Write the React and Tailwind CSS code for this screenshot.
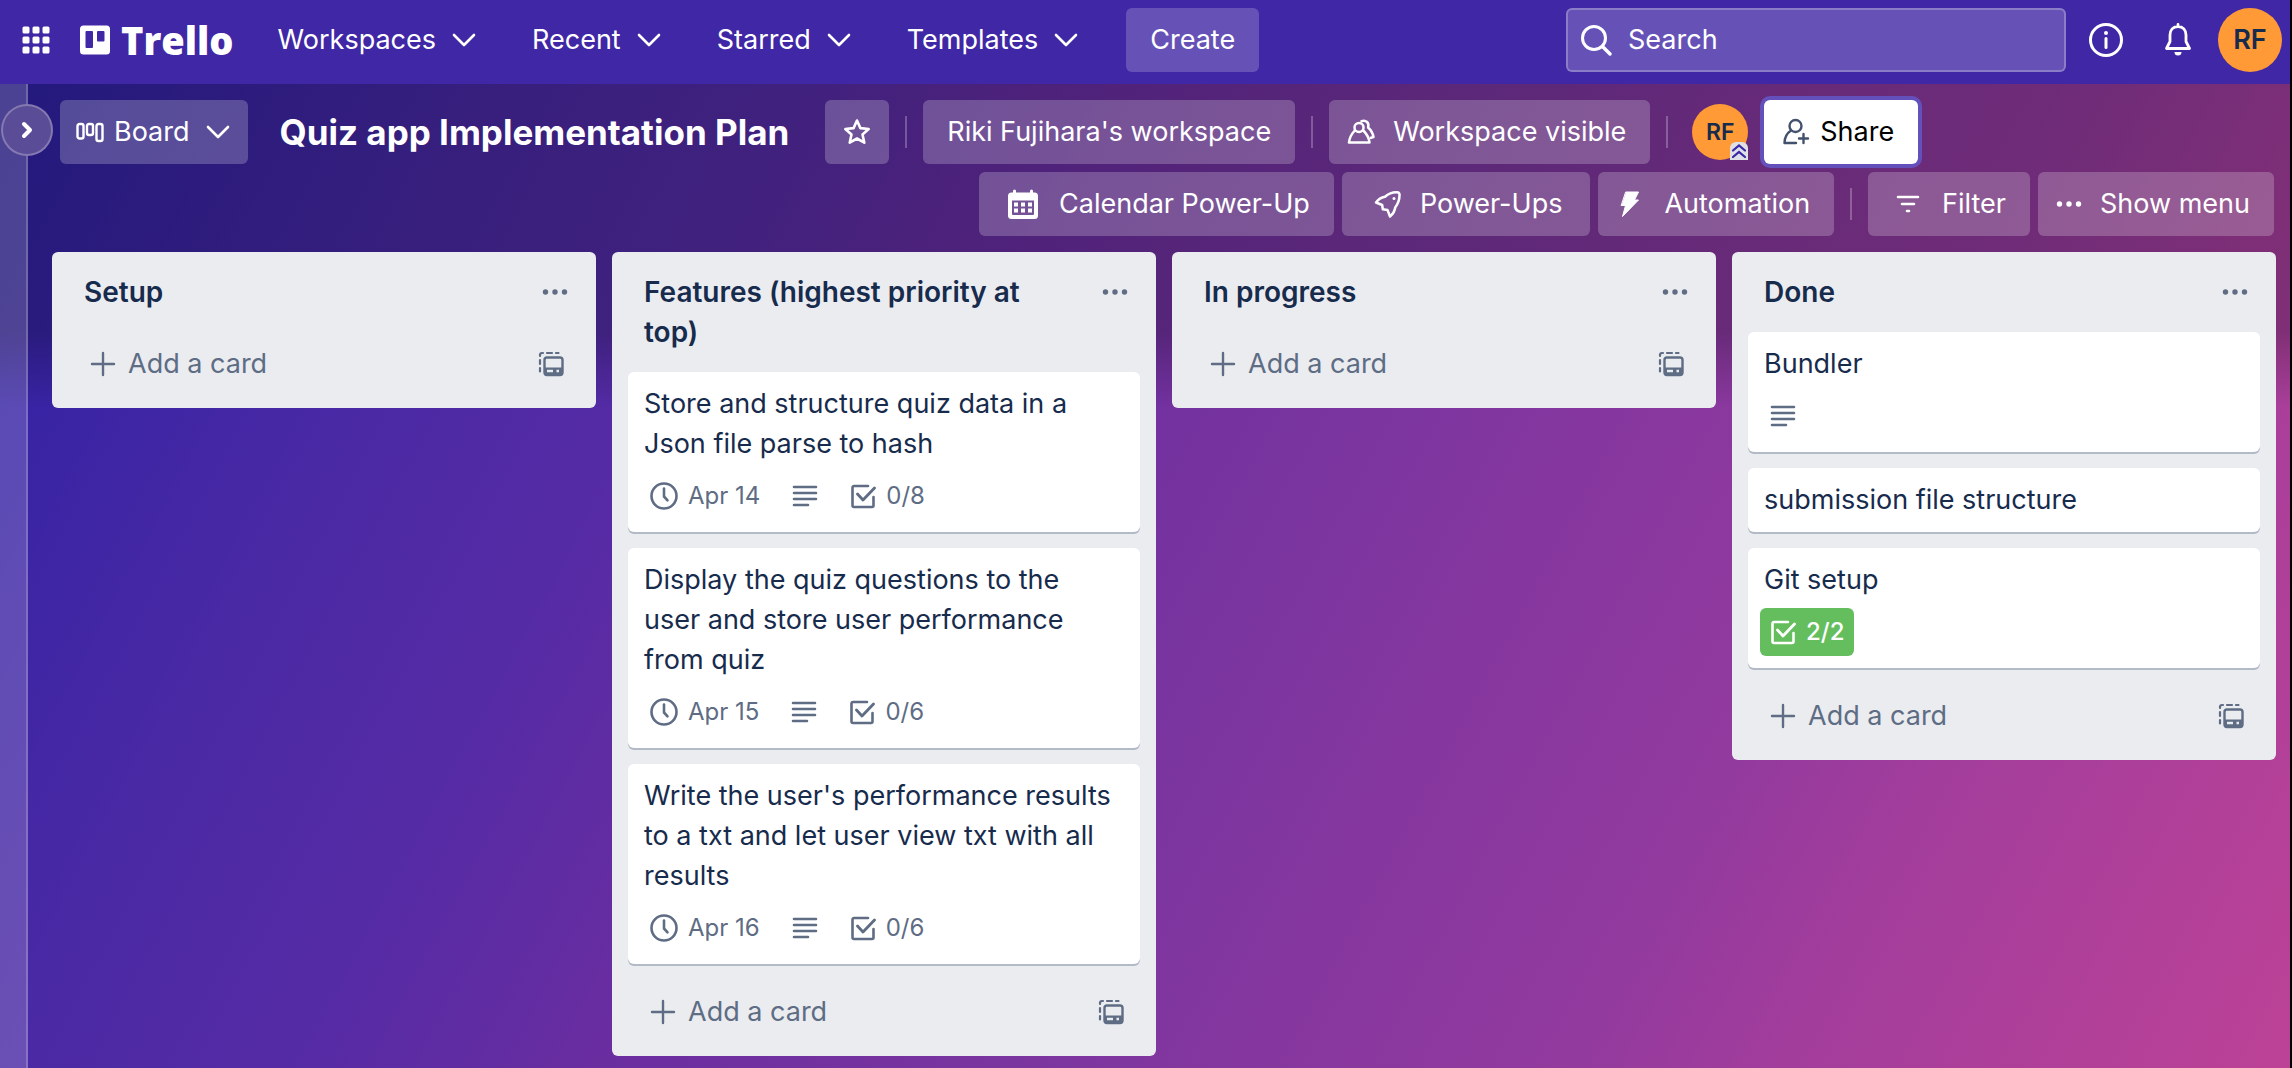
const FONT = "font-['Inter','Liberation_Sans',sans-serif]";

function Svg({ w, h = w, box = "0 0 24 24", className = "", children }) {
  return (
    <svg width={w} height={h} viewBox={box} fill="none" stroke="currentColor" strokeWidth="2" strokeLinecap="round" strokeLinejoin="round" className={"shrink-0 " + className} aria-hidden="true">
      {children}
    </svg>
  );
}

const Chevron = () => (
  <Svg w={24}><path d="M2 7l10 10L22 7" strokeWidth="2.6" /></Svg>
);

const GridDots = () => (
  <Svg w={28} box="0 0 28 28">
    {[0, 10, 20].map((y) => [0, 10, 20].map((x) => (
      <rect key={x + "-" + y} x={x + 0.5} y={y + 0.5} width="7" height="7" rx="1.5" fill="currentColor" stroke="none" />
    )))}
  </Svg>
);

const TrelloMark = () => (
  <Svg w={32} box="0 0 32 32">
    <path fill="currentColor" stroke="none" fillRule="evenodd" d="M4.500 1.500h23a3.500 3.500 0 0 1 3.500 3.500v22a3.500 3.500 0 0 1-3.500 3.500h-23A3.500 3.500 0 0 1 1 27V5a3.500 3.500 0 0 1 3.500-3.500zM7.500 7a1 1 0 0 0-1 1v15a1 1 0 0 0 1 1h5.500a1 1 0 0 0 1-1v-15a1 1 0 0 0-1-1zM19 7a1 1 0 0 0-1 1v8.500a1 1 0 0 0 1 1h5.500a1 1 0 0 0 1-1V8a1 1 0 0 0-1-1z" />
  </Svg>
);

const BoardIcon = () => (
  <Svg w={28} h={24} box="0 0 28 24">
    <rect x="1.500" y="4" width="6" height="14.500" rx="2" strokeWidth="2.400" />
    <rect x="11" y="4" width="6" height="11" rx="2" strokeWidth="2.400" />
    <rect x="20.500" y="4" width="6" height="17" rx="2" strokeWidth="2.400" />
  </Svg>
);

const StarIcon = () => (
  <Svg w={28} box="0 0 28 28">
    <path strokeWidth="2.600" d="M14 2.500l3.400 7.600 8.300.9-6.200 5.500 1.800 8.200L14 20.500l-7.300 4.200 1.800-8.200L2.300 11l8.300-.9z" />
  </Svg>
);

const PeopleIcon = () => (
  <Svg w={28} box="0 0 28 28">
    <circle cx="12" cy="9.500" r="4.500" strokeWidth="2.500" />
    <path strokeWidth="2.500" d="M7.800 12.500C4.500 16 2.500 19.500 2 24.500h20.500c-.5-5-2.700-8.500-6.200-12" />
    <path strokeWidth="2.500" d="M14.500 3.200c4.500-1.400 8 1.500 6.600 6.300 2.900 2.500 4.600 5.500 5.400 9.500l-2.500.8" />
  </Svg>
);

const PersonAddIcon = () => (
  <Svg w={28} box="0 0 28 28">
    <circle cx="13.500" cy="8" r="6" strokeWidth="2.400" />
    <path strokeWidth="2.400" d="M14 25H2.500c0-5.500 2-9.500 6.500-12.500" />
    <path strokeWidth="2.400" d="M21.500 16v9M17 20.500h9" />
  </Svg>
);

const CalendarIcon = () => (
  <Svg w={32} box="0 0 32 32">
    <path fill="currentColor" stroke="none" fillRule="evenodd" d="M6 3a1.500 1.500 0 0 1 3 0v1.500h14V3a1.500 1.500 0 0 1 3 0v1.500h1.500A3.500 3.500 0 0 1 31 8v19.500a3.500 3.500 0 0 1-3.500 3.500h-23A3.500 3.500 0 0 1 1 27.500V8a3.500 3.500 0 0 1 3.500-3.500H6zM5 12.500V26a1 1 0 0 0 1 1h20a1 1 0 0 0 1-1V12.500z" />
    {[15, 21].map((y) => [7, 14, 21].map((x) => (
      <rect key={x + "-" + y} x={x} y={y - 0.5} width="4" height="4" fill="currentColor" stroke="none" />
    )))}
  </Svg>
);

const RocketIcon = () => (
  <Svg w={28} box="0 0 28 28">
    <path strokeWidth="2.500" d="M25.500 4.500c-.2-1.500-.8-2-2.300-2.200-5-.3-8.700 1.400-12.200 4.500C7 7.500 4.500 9 2 12.500L8.200 15l.6 4.200 4.700.8L16 26.500c3-2.500 4.800-5.300 5.200-9 3-4 4.500-8 4.300-13z" />
    <circle cx="20" cy="8.500" r="1.500" fill="currentColor" stroke="none" />
  </Svg>
);

const BoltIcon = () => (
  <Svg w={28} box="0 0 28 28">
    <path fill="currentColor" strokeWidth="1" d="M10 2h12.500l-4 8h4L6.500 26.500l3-11H5.500z" />
  </Svg>
);

const FilterIcon = () => (
  <Svg w={24}><path strokeWidth="2.600" d="M2 5h20M6 12h12M11 19h2" /></Svg>
);

const Dots = () => (
  <Svg w={26} h={8} box="0 0 26 8">
    {[3.5, 13, 22.5].map((x) => <circle key={x} cx={x} cy="4" r="2.700" fill="currentColor" stroke="none" />)}
  </Svg>
);

const PlusIcon = () => (
  <Svg w={26} box="0 0 26 26"><path strokeWidth="2.400" d="M13 2v22M2 13h22" /></Svg>
);

const TemplateIcon = () => (
  <Svg w={26} box="0 0 26 26">
    <path strokeWidth="2.200" d="M2 5V4a2 2 0 0 1 2-2h1M9 2h5M18 2h2.500M2 9v4M2 17v3.500" />
    <rect x="6.500" y="6.500" width="18" height="17.500" rx="2.500" strokeWidth="2.400" />
    <path fill="currentColor" stroke="none" fillRule="evenodd" d="M6 16.500h19V24H6zM9 18.800v2.400h6v-2.400zM18.500 18.800v2.400H21v-2.400z" />
  </Svg>
);

const ClockIcon = () => (
  <Svg w={28} box="0 0 28 28">
    <circle cx="14" cy="14" r="12.500" strokeWidth="2.600" />
    <path strokeWidth="2.600" d="M14 6.500v8l3.500 3.800" />
  </Svg>
);

const LinesIcon = () => (
  <Svg w={26} box="0 0 26 26"><path strokeWidth="2.600" d="M2 4h22M2 10h22M2 16h22M2 22h14" /></Svg>
);

const CheckIcon = () => (
  <Svg w={26} box="0 0 26 26">
    <path strokeWidth="2.600" d="M18 3H4a1.500 1.500 0 0 0-1.500 1.500v18A1.500 1.500 0 0 0 4 24h18a1.500 1.500 0 0 0 1.500-1.500V14" />
    <path strokeWidth="2.800" d="M7.500 11l5.500 6L24.500 5" />
  </Svg>
);

const Separator = ({ className }) => <span className={"h-8 w-[2px] bg-white/25 " + className} />;

function NavMenu({ label }) {
  return (
    <button type="button" className="flex h-16 items-center gap-4 text-[27px]">
      {label}
      <Chevron />
    </button>
  );
}

function HeaderButton({ className = "", children }) {
  return (
    <button type="button" className={"flex h-16 items-center rounded-md bg-white/22 text-[27px] whitespace-nowrap " + className}>
      {children}
    </button>
  );
}

function Card({ title, due, description, checklist, done }) {
  return (
    <article className="rounded-md bg-white py-3 pr-6 pl-4 shadow-[0_2px_0_#b3b9c7]">
      <h3 className="text-[27px] leading-10 text-[#172b4d]">{title}</h3>
      {(due || description || checklist) && (
        <div className={"flex text-[24px] leading-8 text-[#5e6c84] " + (done ? "h-14 items-start pt-2" : "-mb-2 h-16 items-center gap-8 px-[6px]")}>
          {due && <time className="flex items-center gap-[10px]"><ClockIcon />{due}</time>}
          {description && <LinesIcon />}
          {checklist && (
            <span className={"flex items-center gap-[10px] " + (done ? "-ml-1 h-12 rounded-md bg-[#65be5d] px-[10px] font-medium text-white" : "")}>
              <CheckIcon />
              {checklist}
            </span>
          )}
        </div>
      )}
    </article>
  );
}

function List({ title, cards = [] }) {
  return (
    <section className="flex-1 rounded-md bg-[#ebecf0] px-4 pb-3 text-[#5e6c84]">
      <header className="flex items-start justify-between pt-5 pr-3 pb-5 pl-4">
        <h2 className="pr-12 text-[28px] leading-10 font-semibold text-[#172b4d]">{title}</h2>
        <button type="button" aria-label="List actions" className="flex h-10 items-center"><Dots /></button>
      </header>
      <div className="flex flex-col gap-4">
        {cards.map((card) => <Card key={card.title} {...card} />)}
      </div>
      <footer className={"flex h-16 items-center justify-between pr-4 pl-[22px] " + (cards.length ? "mt-4" : "")}>
        <button type="button" className="flex items-center gap-3 text-[27px]"><PlusIcon />Add a card</button>
        <button type="button" aria-label="Create from template"><TemplateIcon /></button>
      </footer>
    </section>
  );
}

const lists = [
  { title: "Setup" },
  {
    title: "Features (highest priority at top)",
    cards: [
      { title: "Store and structure quiz data in a Json file parse to hash", due: "Apr 14", description: true, checklist: "0/8" },
      { title: "Display the quiz questions to the user and store user performance from quiz", due: "Apr 15", description: true, checklist: "0/6" },
      { title: "Write the user's performance results to a txt and let user view txt with all results", due: "Apr 16", description: true, checklist: "0/6" },
    ],
  },
  { title: "In progress" },
  {
    title: "Done",
    cards: [
      { title: "Bundler", description: true },
      { title: "submission file structure" },
      { title: "Git setup", checklist: "2/2", done: true },
    ],
  },
];

export default function App() {
  return (
    <div className={"flex min-h-screen flex-col border-r-2 border-black bg-[linear-gradient(118deg,#2f21a4_3%,#4a29a4_20%,#552ba5_30%,#6a2da0_41%,#78349f_53%,#933a9e_75%,#a23d9c_82%,#bc4296_100%)] text-white " + FONT}>
      <nav className="flex h-[84px] items-center bg-[#4027a5] pt-0 pr-2 pb-1 pl-[22px]">
        <button type="button" aria-label="Apps"><GridDots /></button>
        <a href="#home" className="ml-[29px] flex items-center gap-[10px] font-['Open_Sans','Noto_Sans',sans-serif] text-[38px] leading-10 font-extrabold"><TrelloMark />Trello</a>
        <div className="ml-11 flex items-center gap-14">
          {["Workspaces", "Recent", "Starred", "Templates"].map((label) => <NavMenu key={label} label={label} />)}
        </div>
        <button type="button" className="ml-12 h-16 rounded-md bg-white/20 px-6 text-[27px]">Create</button>
        <label className="ml-auto flex h-16 w-[500px] items-center gap-4 rounded-md border-2 border-white/25 bg-white/20 px-3">
          <Svg w={32} box="0 0 32 32"><circle cx="14" cy="14" r="11.500" strokeWidth="3" /><path d="M22.500 22.500L30 30" strokeWidth="3.400" /></Svg>
          <input type="search" aria-label="Search" placeholder="Search" className="w-full bg-transparent text-[27px] outline-none placeholder:text-white" />
        </label>
        <button type="button" aria-label="Information" className="ml-[22px]">
          <Svg w={36} box="0 0 36 36"><circle cx="18" cy="18" r="15.500" strokeWidth="3" /><path d="M18 16.500v9" strokeWidth="3" /><circle cx="18" cy="11" r="2" fill="currentColor" stroke="none" /></Svg>
        </button>
        <button type="button" aria-label="Notifications" className="ml-9">
          <Svg w={36} box="0 0 36 36"><path strokeWidth="2.800" d="M18 4.500c-5 0-8 3.500-8 8.500v6.500L6.500 26.500h23L26 19.500V13c0-5-3-8.500-8-8.500zM18 2.500v2" /><path d="M14.500 30h7a3.500 3.500 0 0 1-7 0z" fill="currentColor" stroke="none" /></Svg>
        </button>
        <button type="button" className="ml-[22px] size-16 rounded-full bg-[#ff9a36] text-[27px] font-semibold text-[#172b4d]">RF</button>
      </nav>

      <div className="flex flex-1 bg-[linear-gradient(to_bottom,#0000003d_0px,#0000003d_248px,#00000000_324px)]">
        <aside className="w-7 shrink-0 border-r-2 border-white/20 bg-white/18 pt-5">
          <button type="button" aria-label="Expand sidebar" className="relative ml-px flex size-[52px] items-center justify-center rounded-full border-2 border-white/25 bg-[#5b4c97]">
            <Svg w={20} box="0 0 20 20"><path d="M7 4l6 6-6 6" strokeWidth="4" /></Svg>
          </button>
        </aside>
        <main className="min-w-0 flex-1 pr-[14px] pb-3 pl-6">
          <header className="pt-4 pr-[2px] pl-2">
            <div className="flex h-16 items-center">
              <HeaderButton className="pr-[18px] pl-4"><BoardIcon /><span className="ml-[10px] mr-4">Board</span><Chevron /></HeaderButton>
              <h1 className="mr-9 ml-8 text-[35px] leading-10 font-bold whitespace-nowrap">Quiz app Implementation Plan</h1>
              <HeaderButton className="w-16 justify-center"><StarIcon /></HeaderButton>
              <Separator className="mx-4" />
              <HeaderButton className="px-6">Riki Fujihara's workspace</HeaderButton>
              <Separator className="mx-4" />
              <HeaderButton className="gap-[18px] pr-6 pl-[18px]"><PeopleIcon />Workspace visible</HeaderButton>
              <Separator className="mx-4" />
              <button type="button" className="relative ml-2 size-14 rounded-full bg-[#ff9a36] text-[23px] font-semibold text-[#172b4d]">
                RF
                <span className="absolute right-0 bottom-0 rounded-t-md bg-[#dfe1e6] text-[#3a26a6]">
                  <Svg w={18} box="0 0 18 18"><path strokeWidth="2.200" strokeLinejoin="miter" d="M3 8.500l6-5 6 5M3 15l6-5 6 5" /></Svg>
                </span>
              </button>
              <button type="button" className="ml-4 flex h-16 items-center gap-[10px] rounded-md bg-white pr-6 pl-[18px] text-[27px] text-black ring-4 ring-[#6450bb]">
                <span className="text-[#42526e]"><PersonAddIcon /></span>Share
              </button>
            </div>
            <div className="mt-2 flex items-center justify-end gap-2">
              <HeaderButton className="gap-5 pr-6 pl-7"><CalendarIcon />Calendar Power-Up</HeaderButton>
              <HeaderButton className="gap-[18px] pr-7 pl-8"><RocketIcon />Power-Ups</HeaderButton>
              <HeaderButton className="gap-5 pr-6 pl-[18px]"><BoltIcon />Automation</HeaderButton>
              <Separator className="mx-2" />
              <HeaderButton className="gap-[22px] pr-6 pl-7"><FilterIcon />Filter</HeaderButton>
              <HeaderButton className="gap-[18px] pr-6 pl-[18px]"><Dots />Show menu</HeaderButton>
            </div>
          </header>
          <div className="mt-4 flex items-start gap-4">
            {lists.map((list) => <List key={list.title} {...list} />)}
          </div>
        </main>
      </div>
    </div>
  );
}
